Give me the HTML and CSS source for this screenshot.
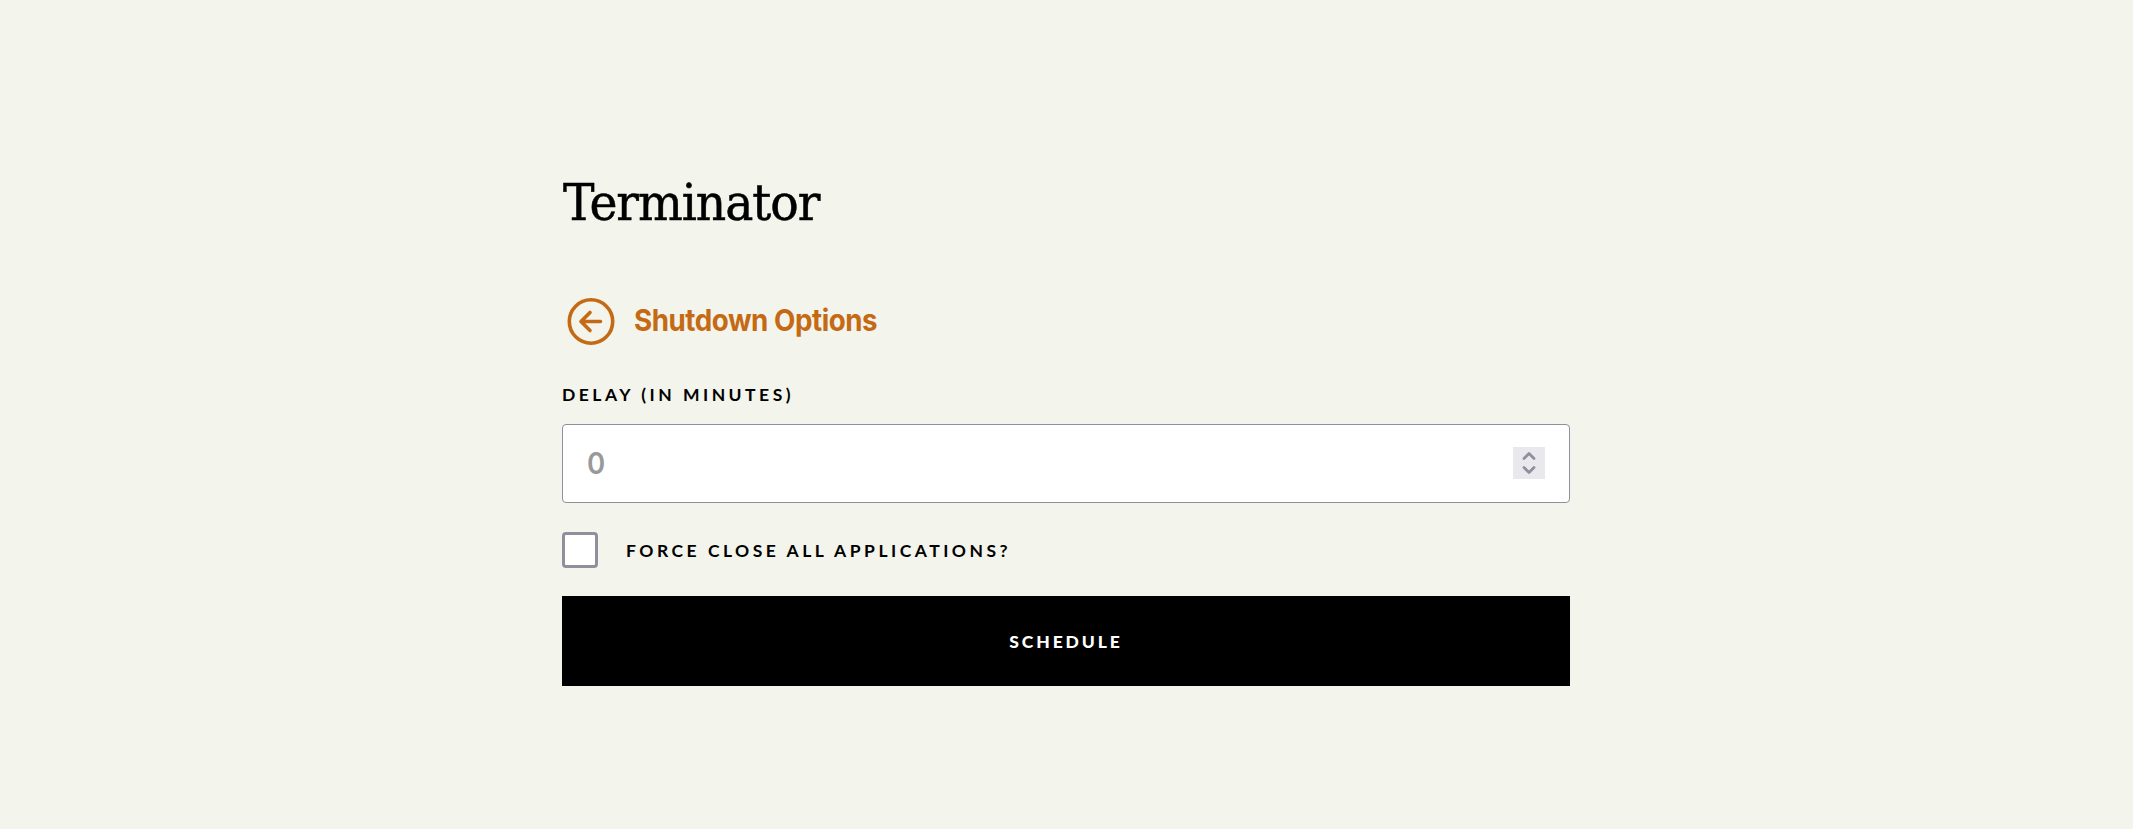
FILE: index.html
```html
<!DOCTYPE html>
<html lang="en">
<head>
<meta charset="utf-8">
<title>Terminator</title>
<link rel="stylesheet" href="styles.css">
</head>
<body>
<main class="page">
  <div class="column">
    <h1 class="title"><span class="title-text">Terminator</span></h1>
    <div class="heading">
      <svg class="back" viewBox="0 0 48 48" fill="none" stroke="currentColor" stroke-width="3.600" stroke-linecap="round" stroke-linejoin="round"><circle cx="24" cy="24.500" r="21.700"/><path d="M33.500 24.500H14M23 15.500L14 24.500l9 9"/></svg>
      <h2 class="subtitle">Shutdown Options</h2>
    </div>
    <div class="label delay-label">DELAY (IN MINUTES)</div>
    <div class="field">
      <span class="value">0</span>
      <svg class="spinner" viewBox="0 0 32 32" fill="none" stroke="#8f8f9d" stroke-width="2.800" stroke-linecap="round" stroke-linejoin="round"><path d="M11 11.500L16 6.500l5 5M11 20.500l5 5 5-5"/></svg>
    </div>
    <div class="check-row">
      <span class="checkbox"></span>
      <span class="label force-label">FORCE CLOSE ALL APPLICATIONS?</span>
    </div>
    <div class="button"><span class="button-text">SCHEDULE</span></div>
  </div>
</main>
</body>
</html>
```
FILE: styles.css
```css
body {
  margin: 0;
  background: #fff;
  color: #000;
}
.page {
  box-sizing: border-box;
  width: 2133px;
  height: 829px;
  padding: 164px 563px 0 562px;
  background: #f3f4eb;
}
.column {
  display: flex;
  flex-direction: column;
}
.title {
  margin: 0;
  height: 80px;
  font: 400 51px/77px "DejaVu Serif Condensed", "DejaVu Serif", serif;
}
.title-text {
  display: inline-block;
  margin-left: 1px;
  letter-spacing: -1px;
  transform: scaleX(1.03);
  transform-origin: left;
  -webkit-text-stroke: 0.5px #000;
}
.heading {
  display: flex;
  align-items: center;
  height: 48px;
  margin-top: 53px;
  padding-left: 5px;
  color: #c56a14;
}
.back {
  width: 48px;
  height: 48px;
}
.subtitle {
  margin: 0 0 2px 19px;
  font: 700 30px/44px Inter, sans-serif;
  letter-spacing: -0.5px;
  white-space: nowrap;
  transform: scaleX(0.925);
  transform-origin: left;
}
.label {
  font: 700 17.500px/24px Lato, sans-serif;
  letter-spacing: 3.500px;
  white-space: nowrap;
}
.delay-label {
  margin-top: 38px;
  height: 41px;
}
.force-label {
  padding-top: 1px;
}
.field {
  box-sizing: border-box;
  display: flex;
  align-items: center;
  justify-content: space-between;
  height: 79px;
  padding: 0 24px 2px;
  border: 1px solid #8f8f9d;
  border-radius: 4px;
  background: #fff;
}
.value {
  font: 600 30px/40px Inter, sans-serif;
  color: #999;
  transform: scaleX(0.92);
  transform-origin: left;
}
.spinner {
  width: 32px;
  height: 32px;
  background: #e9e9ed;
}
.check-row {
  display: flex;
  align-items: center;
  gap: 28px;
  height: 36px;
  margin-top: 29px;
}
.checkbox {
  box-sizing: border-box;
  width: 36px;
  height: 36px;
  border: 3px solid #8f8f9d;
  border-radius: 4px;
  background: #fff;
}
.button {
  display: flex;
  align-items: center;
  justify-content: center;
  height: 90px;
  margin-top: 28px;
  background: #000;
  color: #fff;
}
.button-text {
  padding-top: 2px;
  font: 900 17.500px/24px Lato, sans-serif;
  letter-spacing: 2.900px;
}
```
